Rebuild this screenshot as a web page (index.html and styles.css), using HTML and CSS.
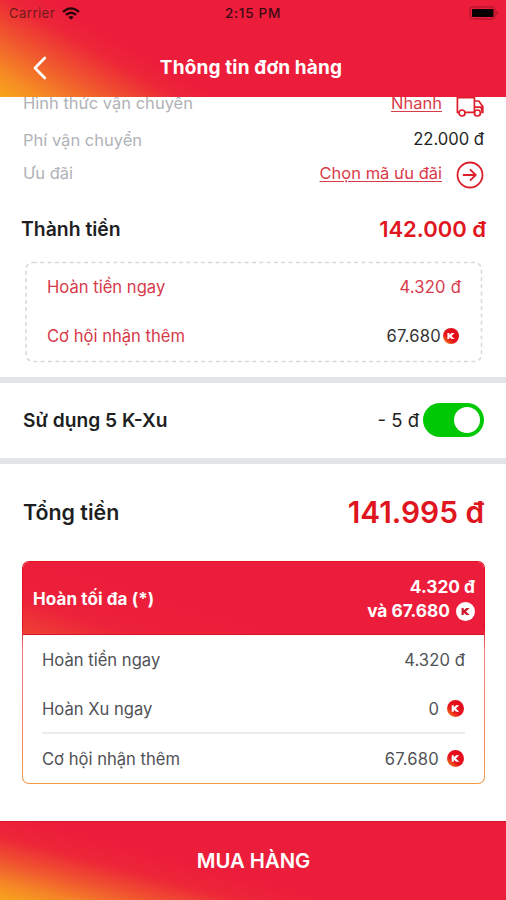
FILE: index.html
```html
<!DOCTYPE html>
<html lang="vi">
<head>
<meta charset="utf-8">
<title>Thông tin đơn hàng</title>
<link rel="stylesheet" href="styles.css">
</head>
<body>
<svg class="defs" width="0" height="0" aria-hidden="true">
  <defs>
    <linearGradient id="coin-fill" x1="0" y1="1" x2="0.7" y2="0.2">
      <stop offset="0" stop-color="#f9a01b"/>
      <stop offset="0.5" stop-color="#e6141c"/>
      <stop offset="1" stop-color="#e30c1c"/>
    </linearGradient>
    <symbol id="coin" viewBox="0 0 16 16">
      <circle cx="8" cy="8" r="8" fill="url(#coin-fill)"/>
      <path d="M4.4 4.9h2v2l2.2-2h3L8.4 8l3.2 3.1h-3l-2.2-2v2h-2z" fill="#fff"/>
    </symbol>
    <symbol id="coin-light" viewBox="0 0 16 16">
      <circle cx="8" cy="8" r="8" fill="#fff"/>
      <path d="M4.7 5h1.8v2l2.2-2h2.8L8.4 8l3.1 3H8.7L6.5 9v2H4.7z" fill="#c9182c"/>
    </symbol>
  </defs>
</svg>
<div class="screen">
  <header class="header">
    <div class="status">
      <div class="carrier"><span class="t-carrier">Carrier</span>
        <svg class="wifi" width="18" height="13" viewBox="0 0 18 13" fill="none" stroke="#26060b" stroke-width="2.3">
          <path d="M1 4.9Q9-2.2 17 4.9M3.9 7.9Q9 3.5 14.1 7.9"/><path d="M6.4 10.1Q9 8 11.6 10.1L9 12.8z" fill="#26060b" stroke="none"/>
        </svg>
      </div>
      <span class="clock">2:15 PM</span>
      <svg class="battery" width="30" height="14" viewBox="0 0 30 14">
        <rect x="1" y="1" width="25" height="12" rx="3" fill="none" stroke="#a51428"/>
        <rect x="3" y="3" width="21.5" height="8" rx="1" fill="#050102"/>
        <path d="M27.5 4.5q3 2.5 0 5z" fill="#a51428"/>
      </svg>
    </div>
    <div class="nav">
      <svg class="back" width="14" height="24" viewBox="0 0 14 24" fill="none" stroke="#fff" stroke-width="2.7" stroke-linecap="round" stroke-linejoin="round"><path d="M11.8 2L2 12l9.8 10"/></svg>
      <h1 class="title">Thông tin đơn hàng</h1>
    </div>
  </header>

  <main class="content">
    <section class="summary">
      <div class="row ship"><span class="label l-ship">Hình thức vận chuyển</span>
        <span class="action"><a class="link l-fast">Nhanh</a>
          <svg class="truck" width="28" height="22" viewBox="0 0 28 22" fill="none" stroke="#dd1f2b" stroke-width="1.7">
            <path d="M3 17.3H1.4V2.6h17v14.7H9M18.4 6h4.4l4 5.6v5.7h-1.6M18.4 12.2h8.4"/><circle cx="6" cy="18" r="3"/><circle cx="21.4" cy="18" r="3"/><path d="M24 12h3v5h-1.500z" fill="#dd1f2b" stroke="none"/>
          </svg>
        </span>
      </div>
      <div class="row fee"><span class="label l-fee">Phí vận chuyển</span><span class="v-fee">22.000 đ</span></div>
      <div class="row promo"><span class="label l-promo">Ưu đãi</span>
        <span class="action"><a class="link l-code">Chọn mã ưu đãi</a>
          <svg class="arrow" width="28" height="28" viewBox="0 0 28 28" fill="none" stroke="#dd1f2b" stroke-width="1.8" stroke-linecap="round" stroke-linejoin="round"><circle cx="14" cy="14" r="12.5"/><path d="M7.5 14h12M14.5 8.8l5.2 5.2-5.2 5.2"/></svg>
        </span>
      </div>
      <div class="row subtotal"><strong class="l-sub">Thành tiền</strong><strong class="v-sub">142.000 đ</strong></div>
      <div class="cashback">
        <svg class="dash" width="459" height="102"><rect x="2" y="1.5" width="455.500" height="99" rx="7" fill="none" stroke="#d9d9da" stroke-width="1.6" stroke-dasharray="4 3.3"/></svg>
        <div class="cb-row"><span class="l-now">Hoàn tiền ngay</span><span class="v-now">4.320 đ</span></div>
        <div class="cb-row"><span class="l-chance">Cơ hội nhận thêm</span><span class="coins"><span class="v-chance">67.680</span><svg width="16" height="16"><use href="#coin"/></svg></span></div>
      </div>
    </section>

    <section class="row xu"><strong class="l-xu">Sử dụng 5 K-Xu</strong>
      <span class="xu-side"><span class="v-xu">- 5 đ</span><span class="toggle"><span class="knob"></span></span></span>
    </section>

    <section class="row total"><strong class="l-total">Tổng tiền</strong><strong class="v-total">141.995 đ</strong></section>

    <section class="card">
      <div class="card-head"><strong class="l-max">Hoàn tối đa (*)</strong>
        <div class="max"><strong class="v-max">4.320 đ</strong>
          <span class="max-coins"><strong class="v-and">và 67.680</strong><svg width="19" height="19"><use href="#coin-light"/></svg></span></div>
      </div>
      <div class="card-body">
        <div class="line"><span class="c-now">Hoàn tiền ngay</span><span class="cv-now">4.320 đ</span></div>
        <div class="line xu-line"><span class="c-xu">Hoàn Xu ngay</span><span class="card-coins"><span class="cv-xu">0</span><svg width="17" height="17"><use href="#coin"/></svg></span></div>
        <div class="line last"><span class="c-chance">Cơ hội nhận thêm</span><span class="card-coins"><span class="cv-chance">67.680</span><svg width="17" height="17"><use href="#coin"/></svg></span></div>
      </div>
    </section>
  </main>

  <footer class="buy"><span class="t-buy">MUA HÀNG</span></footer>
</div>
</body>
</html>
```

FILE: styles.css
```css
* { box-sizing: border-box; }
body { margin: 0; font-family: Inter, "Liberation Sans", sans-serif; color: #1e1f22; background: #fff; }
svg { display: block; flex: none; }
.defs { position: absolute; }
span, strong, a { white-space: nowrap; }
strong { font-weight: 600; }
.screen { width: 506px; height: 900px; display: flex; flex-direction: column; overflow: hidden; }

.header { height: 97px; flex: none; color: #fff; background: linear-gradient(30deg, #f9a51c 0, #f68a24 22px, #f0582e 54px, #ed2638 88px, #ec1d3b 108px); }
.status { height: 27px; display: grid; grid-template-columns: 1fr auto 1fr; align-items: center; padding: 0 7px 0 9px; color: #3d0a12; }
.carrier { display: flex; align-items: center; gap: 7px; font-size: 13.2px; letter-spacing: .4px; color: #711a1c; margin-top: -1px; }
.clock { font-size: 13.5px; font-weight: 500; letter-spacing: .75px; margin: -1px 0 0 -2px; }
.battery { justify-self: end; margin-top: -1px; }
.nav { height: 70px; display: grid; grid-template-columns: 60px 1fr 60px; align-items: center; }
.back { justify-self: center; margin-left: 20px; margin-top: 11px; }
.title { margin: 11px 4px 0 0; text-align: center; font-size: 19px; line-height: 24px; font-weight: 700; letter-spacing: .15px; }

.content { height: 724px; flex: none; overflow: hidden; }
.row { display: flex; align-items: center; justify-content: space-between; padding: 0 22px 0 23px; }
.summary { height: 300px; border-bottom: 6px solid #e3e4e6; }
.label { font-size: 16.5px; color: #b0b2b6; }
.link { color: #d93a48; font-size: 16.5px; text-decoration: underline; text-decoration-thickness: 1px; text-underline-offset: 2px; }
.action { display: flex; align-items: center; gap: 14px; }
.ship { height: 40px; margin-top: -14px; }
.truck { margin-top: 5px; }
.fee { height: 34px; }
.v-fee { font-size: 16.6px; margin-top: -2px; }
.promo { height: 34px; padding-bottom: 2px; }
.arrow { margin-top: 3px; }
.subtotal { height: 70px; padding: 6px 20px 0 21px; }
.l-sub { font-size: 19.4px; }
.v-sub { font-size: 22px; color: #df1620; }
.cashback { position: relative; margin: 0 23px 0 24px; height: 102px; padding: 1px 22px 0 23px; color: #d73a4a; font-size: 16.6px; }
.dash { position: absolute; left: 0; top: 0; }
.cb-row { height: 49px; display: flex; align-items: center; justify-content: space-between; }
.v-now { letter-spacing: .2px; }
.coins { display: flex; align-items: center; gap: 2px; color: #333; margin-right: 2px; }
.v-chance { letter-spacing: .25px; }
.xu { height: 81px; padding-bottom: 1px; border-bottom: 6px solid #e3e4e6; }
.l-xu { font-size: 19.2px; }
.xu-side { display: flex; align-items: center; gap: 4px; font-size: 18.5px; }
.toggle { width: 61px; height: 34px; padding: 4px; border-radius: 17px; background: #00c805; display: flex; justify-content: flex-end; }
.knob { width: 26px; height: 26px; border-radius: 50%; background: #fff; }
.total { height: 97px; padding-bottom: 1px; }
.l-total { font-size: 21.4px; }
.v-total { font-size: 29.8px; color: #df1620; }

.card { margin: 0 21px 0 22px; height: 223px; border: 1.5px solid transparent; border-radius: 7px; overflow: hidden;
  background: linear-gradient(#fff, #fff) padding-box, linear-gradient(to top, #f49a45, #f28170 30%, #f08080 60%, #e5121e 70%) border-box; }
.card-head { height: 73px; display: flex; align-items: center; justify-content: space-between; padding: 0 9px; color: #fff; background: linear-gradient(18deg, #ef4236 0, #ec213a 34px, #ec1d3b 80px); border-bottom: 1px solid #dc1425; }
.l-max { font-size: 17px; font-weight: 700; letter-spacing: .1px; margin: 2px 0 0 1px; }
.max { display: flex; flex-direction: column; align-items: flex-end; font-size: 17.3px; line-height: 24px; margin-top: 2px; }
.max strong { font-weight: 700; }
.max-coins { display: flex; align-items: center; gap: 6px; }
.card-body { padding: 0 19px; color: #505256; font-size: 16.6px; }
.line { display: flex; align-items: center; justify-content: space-between; height: 50px; }
.cv-now { letter-spacing: .1px; }
.xu-line { height: 49px; border-bottom: 2px solid #ececed; }
.last { height: 49px; }
.card-coins { display: flex; align-items: center; gap: 8px; margin-right: 1px; }
.cv-chance { letter-spacing: .2px; }

.buy { height: 79px; flex: none; display: flex; align-items: center; justify-content: center; padding: 0 0 2px 1px; color: #fff; font-weight: 600; font-size: 20.3px; border-top: 1px solid #d91528; background: linear-gradient(15deg, #f9a51c 0, #f58427 18px, #f0552f 38px, #ed2638 62px, #ec1d3b 85px); }
```
